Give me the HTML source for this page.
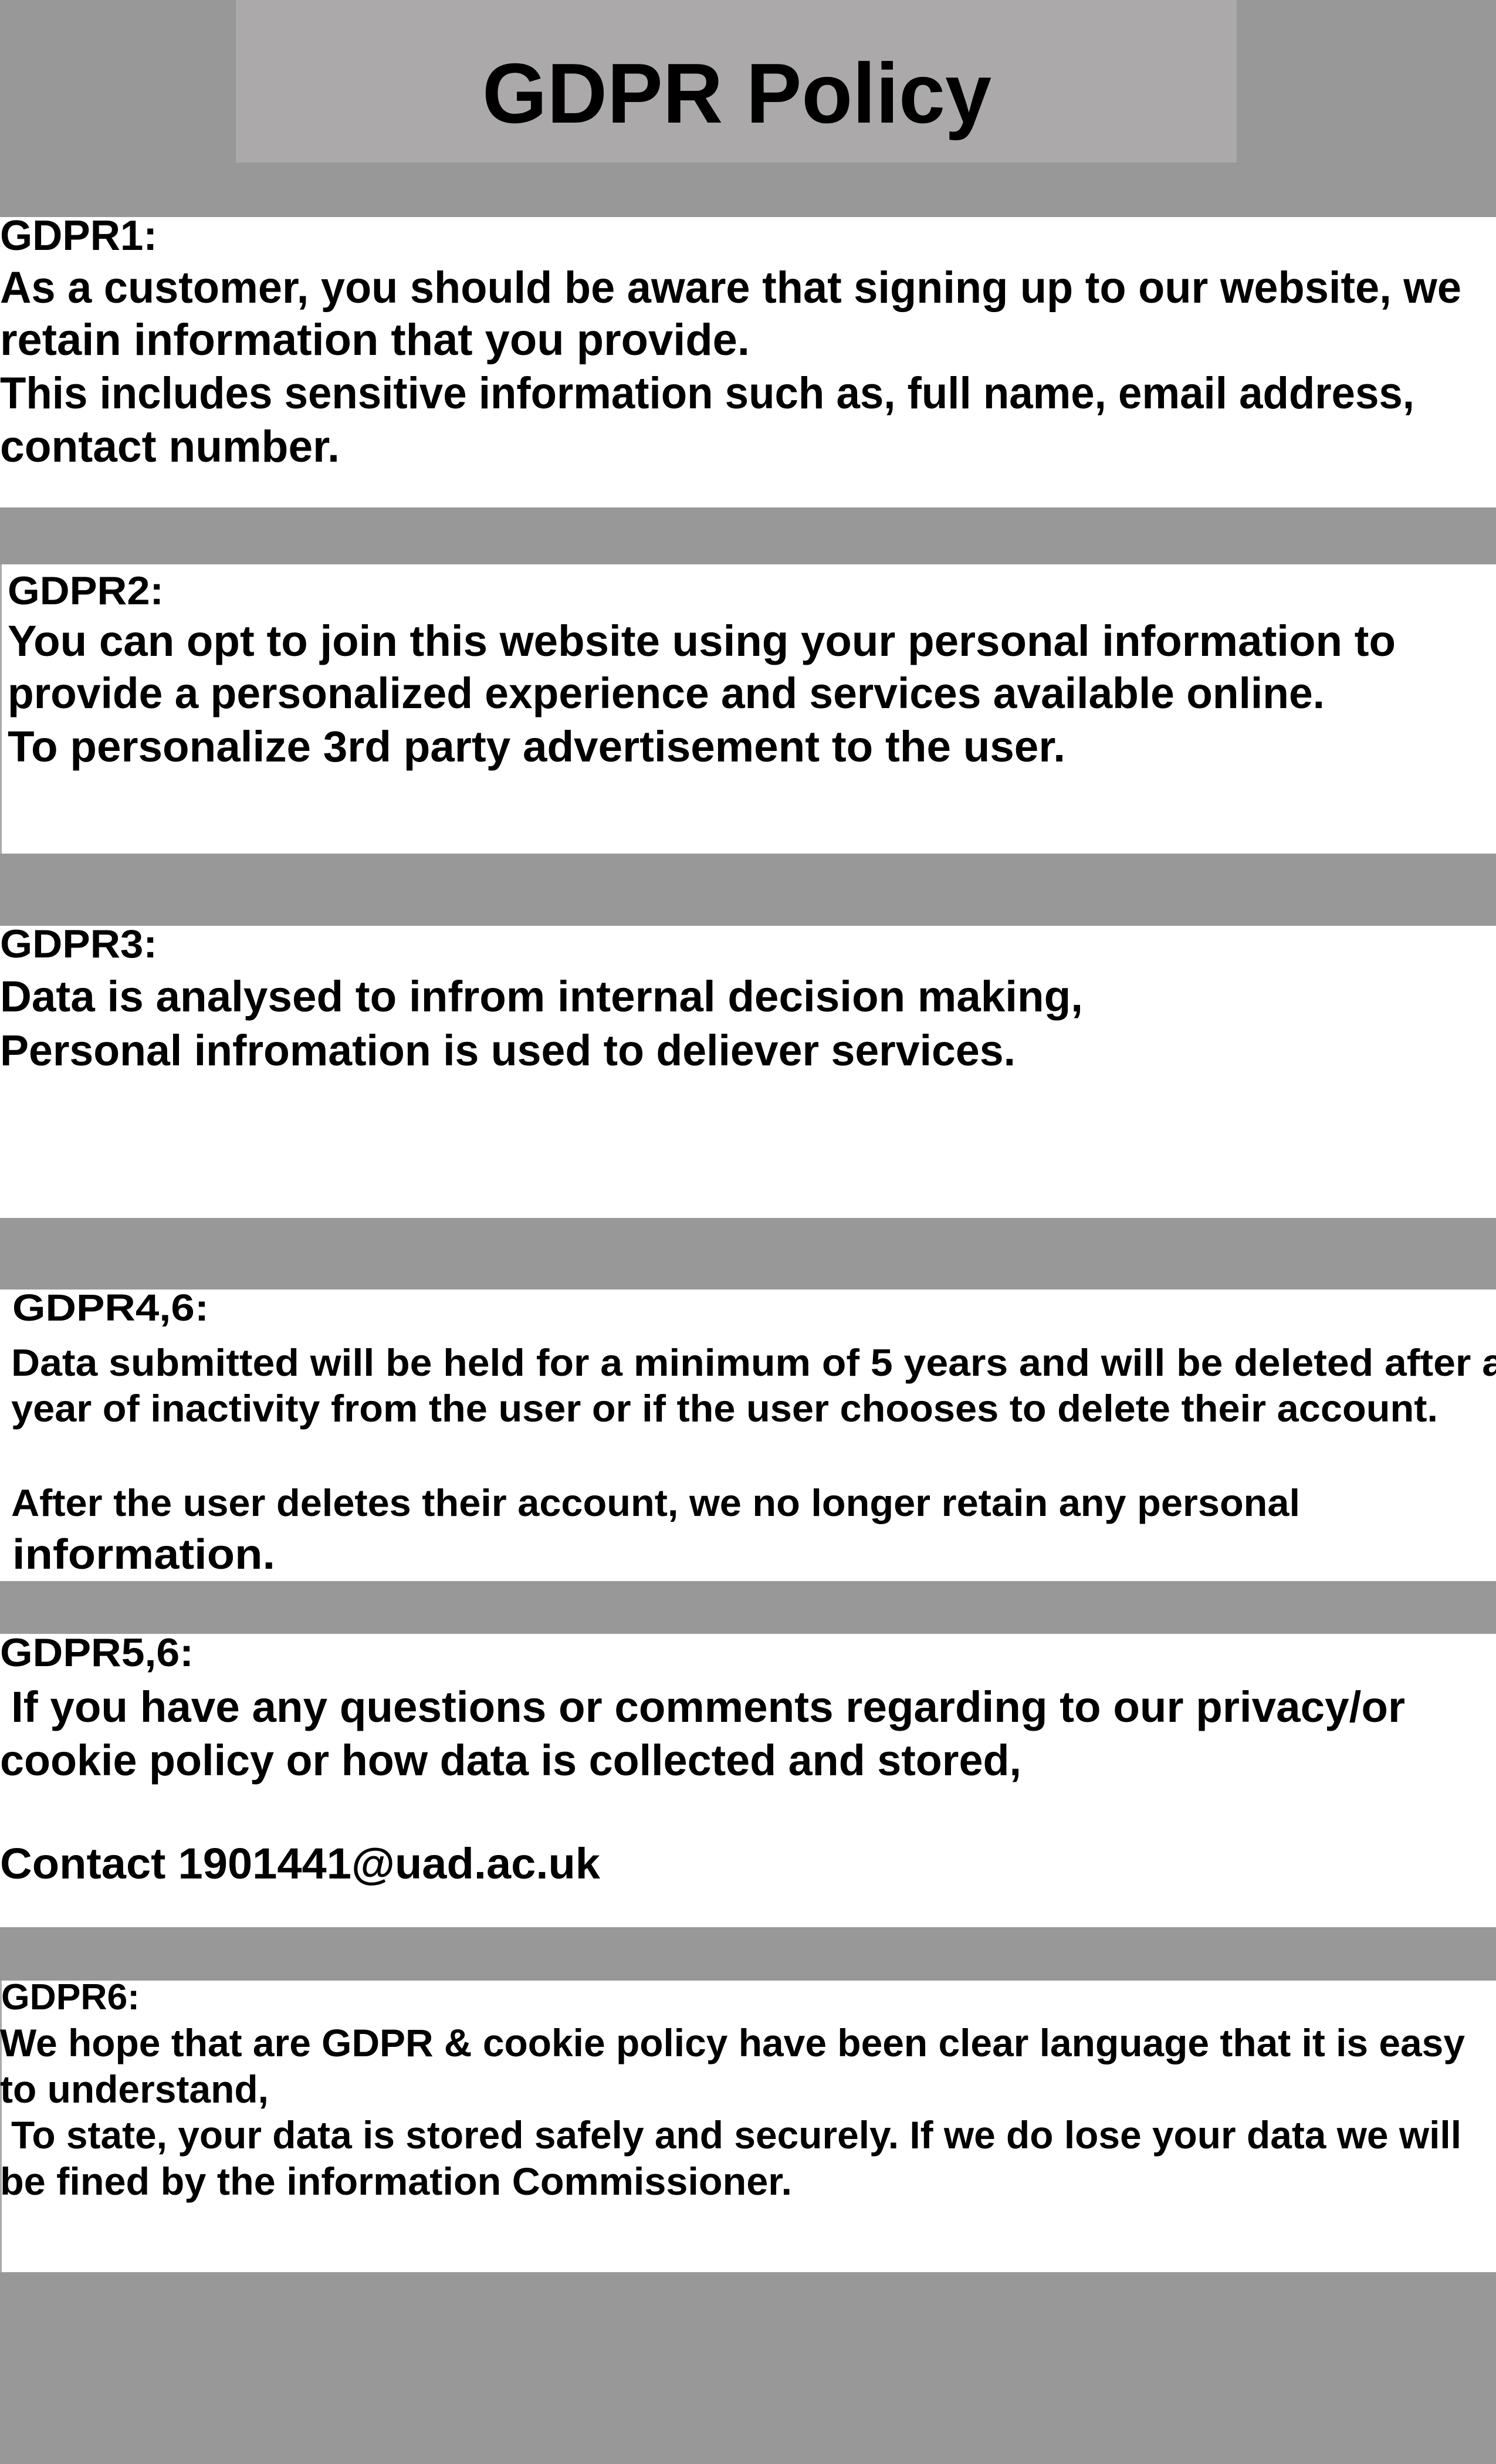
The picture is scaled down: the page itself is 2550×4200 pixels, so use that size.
<!DOCTYPE html>
<html><head><meta charset="utf-8"><style>
html,body{margin:0;padding:0;width:2550px;height:4200px;overflow:hidden;background:#989898}
svg{display:block}
text{font-family:"Liberation Sans",Arial,sans-serif;font-weight:bold;fill:#000}
</style></head><body>
<svg width="2550" height="4200" viewBox="0 0 2550 4200" xmlns="http://www.w3.org/2000/svg">
<rect x="0" y="0" width="2550" height="4200" fill="#989898"/>
<rect x="402" y="0" width="1706" height="277" fill="#aba9aa"/>
<text x="822" y="209" font-size="145" textLength="868" lengthAdjust="spacingAndGlyphs">GDPR Policy</text>

<rect x="0" y="370" width="2550" height="495" fill="#fff"/>
<text x="0" y="426" font-size="72" textLength="268" lengthAdjust="spacingAndGlyphs">GDPR1:</text>
<text x="0" y="516" font-size="76" textLength="2491" lengthAdjust="spacingAndGlyphs">As a customer, you should be aware that signing up to our website, we</text>
<text x="0" y="605" font-size="76" textLength="1278" lengthAdjust="spacingAndGlyphs">retain information that you provide.</text>
<text x="0" y="696" font-size="76" textLength="2411" lengthAdjust="spacingAndGlyphs">This includes sensitive information such as, full name, email address,</text>
<text x="0" y="787" font-size="76" textLength="579" lengthAdjust="spacingAndGlyphs">contact number.</text>

<rect x="0" y="962" width="2550" height="493" fill="#fff"/>
<rect x="0" y="962" width="3" height="493" fill="#aaa"/>
<text x="13" y="1030" font-size="68" textLength="266" lengthAdjust="spacingAndGlyphs">GDPR2:</text>
<text x="13" y="1118" font-size="74" textLength="2366" lengthAdjust="spacingAndGlyphs">You can opt to join this website using your personal information to</text>
<text x="13" y="1207" font-size="74" textLength="2245" lengthAdjust="spacingAndGlyphs">provide a personalized experience and services available online.</text>
<text x="13" y="1298" font-size="74" textLength="1803" lengthAdjust="spacingAndGlyphs">To personalize 3rd party advertisement to the user.</text>

<rect x="0" y="1578" width="2550" height="498" fill="#fff"/>
<text x="0" y="1632" font-size="68" textLength="268" lengthAdjust="spacingAndGlyphs">GDPR3:</text>
<text x="0" y="1724" font-size="74" textLength="1846" lengthAdjust="spacingAndGlyphs">Data is analysed to infrom internal decision making,</text>
<text x="0" y="1816" font-size="74" textLength="1731" lengthAdjust="spacingAndGlyphs">Personal infromation is used to deliever services.</text>

<rect x="0" y="2198" width="2550" height="497" fill="#fff"/>
<text x="21" y="2251" font-size="64" textLength="335" lengthAdjust="spacingAndGlyphs">GDPR4,6:</text>
<text x="19" y="2345" font-size="65" textLength="2545" lengthAdjust="spacingAndGlyphs">Data submitted will be held for a minimum of 5 years and will be deleted after a</text>
<text x="19" y="2423" font-size="65" textLength="2432" lengthAdjust="spacingAndGlyphs">year of inactivity from the user or if the user chooses to delete their account.</text>
<text x="19" y="2584" font-size="65" textLength="2197" lengthAdjust="spacingAndGlyphs">After the user deletes their account, we no longer retain any personal</text>
<text x="21" y="2674" font-size="72" textLength="448" lengthAdjust="spacingAndGlyphs">information.</text>

<rect x="0" y="2785" width="2550" height="500" fill="#fff"/>
<text x="0" y="2840" font-size="68" textLength="330" lengthAdjust="spacingAndGlyphs">GDPR5,6:</text>
<text x="19" y="2935" font-size="74" textLength="2376" lengthAdjust="spacingAndGlyphs">If you have any questions or comments regarding to our privacy/or</text>
<text x="0" y="3026" font-size="74" textLength="1741" lengthAdjust="spacingAndGlyphs">cookie policy or how data is collected and stored,</text>
<text x="0" y="3202" font-size="74" textLength="1023" lengthAdjust="spacingAndGlyphs">Contact 1901441@uad.ac.uk</text>

<rect x="0" y="3376" width="2550" height="497" fill="#fff"/>
<rect x="0" y="3376" width="3" height="497" fill="#aaa"/>
<text x="2" y="3425" font-size="62" textLength="236" lengthAdjust="spacingAndGlyphs">GDPR6:</text>
<text x="0" y="3505" font-size="66" textLength="2497" lengthAdjust="spacingAndGlyphs">We hope that are GDPR &amp; cookie policy have been clear language that it is easy</text>
<text x="0" y="3584" font-size="66" textLength="458" lengthAdjust="spacingAndGlyphs">to understand,</text>
<text x="19" y="3662" font-size="66" textLength="2472" lengthAdjust="spacingAndGlyphs">To state, your data is stored safely and securely. If we do lose your data we will</text>
<text x="0" y="3741" font-size="66" textLength="1350" lengthAdjust="spacingAndGlyphs">be fined by the information Commissioner.</text>
</svg>
</body></html>
